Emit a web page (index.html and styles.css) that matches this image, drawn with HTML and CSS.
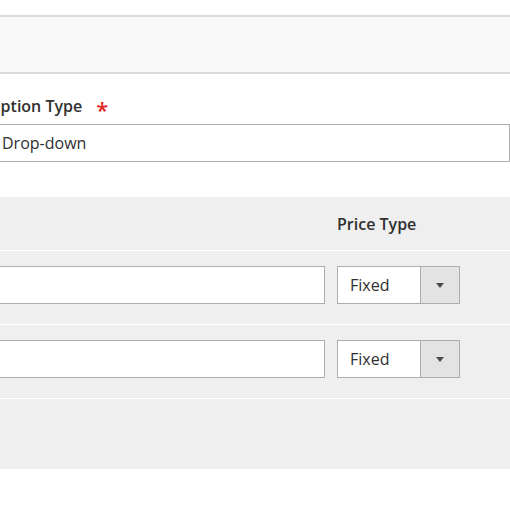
FILE: index.html
```html
<!DOCTYPE html>
<html lang="en">
<head>
<meta charset="utf-8">
<title>Option</title>
<link rel="stylesheet" href="styles.css">
</head>
<body>
<div class="page">
  <div class="bar"></div>
  <div class="field">
    <label class="label">Option Type<span class="req">*</span></label>
    <div class="control">Drop-down</div>
  </div>
  <div class="grid">
    <div class="row head">
      <div class="cell"></div>
      <div class="cell th">Price Type</div>
    </div>
    <div class="row body">
      <div class="cell"><div class="input"></div></div>
      <div class="cell">
        <div class="select"><span class="select-value">Fixed</span><span class="select-btn"><span class="caret"></span></span></div>
      </div>
    </div>
    <div class="row body">
      <div class="cell"><div class="input"></div></div>
      <div class="cell">
        <div class="select"><span class="select-value">Fixed</span><span class="select-btn"><span class="caret"></span></span></div>
      </div>
    </div>
    <div class="foot"></div>
  </div>
</div>
</body>
</html>
```
FILE: styles.css
```css
html, body {
  margin: 0;
  padding: 0;
  background: #ffffff;
  overflow: hidden;
}
body {
  font-family: "Open Sans", "Noto Sans", sans-serif;
  font-size: 16px;
  color: #303030;
}
.page {
  padding-top: 15px;
  margin-left: -9px;
  width: 519px;
}
.bar {
  height: 55px;
  background: #f8f8f8;
  border-top: 2px solid #dadada;
  border-bottom: 2px solid #dadada;
}
.field {
  margin-top: 21px;
}
.label {
  display: block;
  font-weight: 600;
  line-height: 22px;
  margin: 0 0 7px -3px;
}
.req {
  color: #e22626;
  font-size: 22px;
  line-height: 0;
  margin-left: 14px;
  vertical-align: -6px;
}
.control {
  box-sizing: border-box;
  height: 38px;
  border: 1px solid #adadad;
  padding: 0 10px;
  display: flex;
  align-items: center;
  background: #fff;
}
.grid {
  margin-top: 35px;
  background: #efefef;
}
.row {
  display: grid;
  grid-template-columns: 1fr 123px;
  column-gap: 12px;
  padding-right: 50px;
  border-bottom: 1px solid #ffffff;
}
.head {
  height: 53px;
  align-items: center;
}
.th {
  font-weight: 600;
  line-height: 22px;
}
.body {
  padding-top: 15px;
  padding-bottom: 20px;
}
.input {
  box-sizing: border-box;
  height: 38px;
  border: 1px solid #adadad;
  background: #fff;
}
.select {
  box-sizing: border-box;
  height: 38px;
  border: 1px solid #adadad;
  background: #fff;
  display: flex;
}
.select-value {
  flex: 1;
  padding-left: 12px;
  display: flex;
  align-items: center;
}
.select-btn {
  width: 38px;
  border-left: 1px solid #adadad;
  background: #e3e3e3;
  display: flex;
  align-items: center;
  justify-content: center;
}
.caret {
  width: 0;
  height: 0;
  border-left: 4px solid transparent;
  border-right: 4px solid transparent;
  border-top: 5px solid #514943;
}
.foot {
  height: 70px;
}
```
